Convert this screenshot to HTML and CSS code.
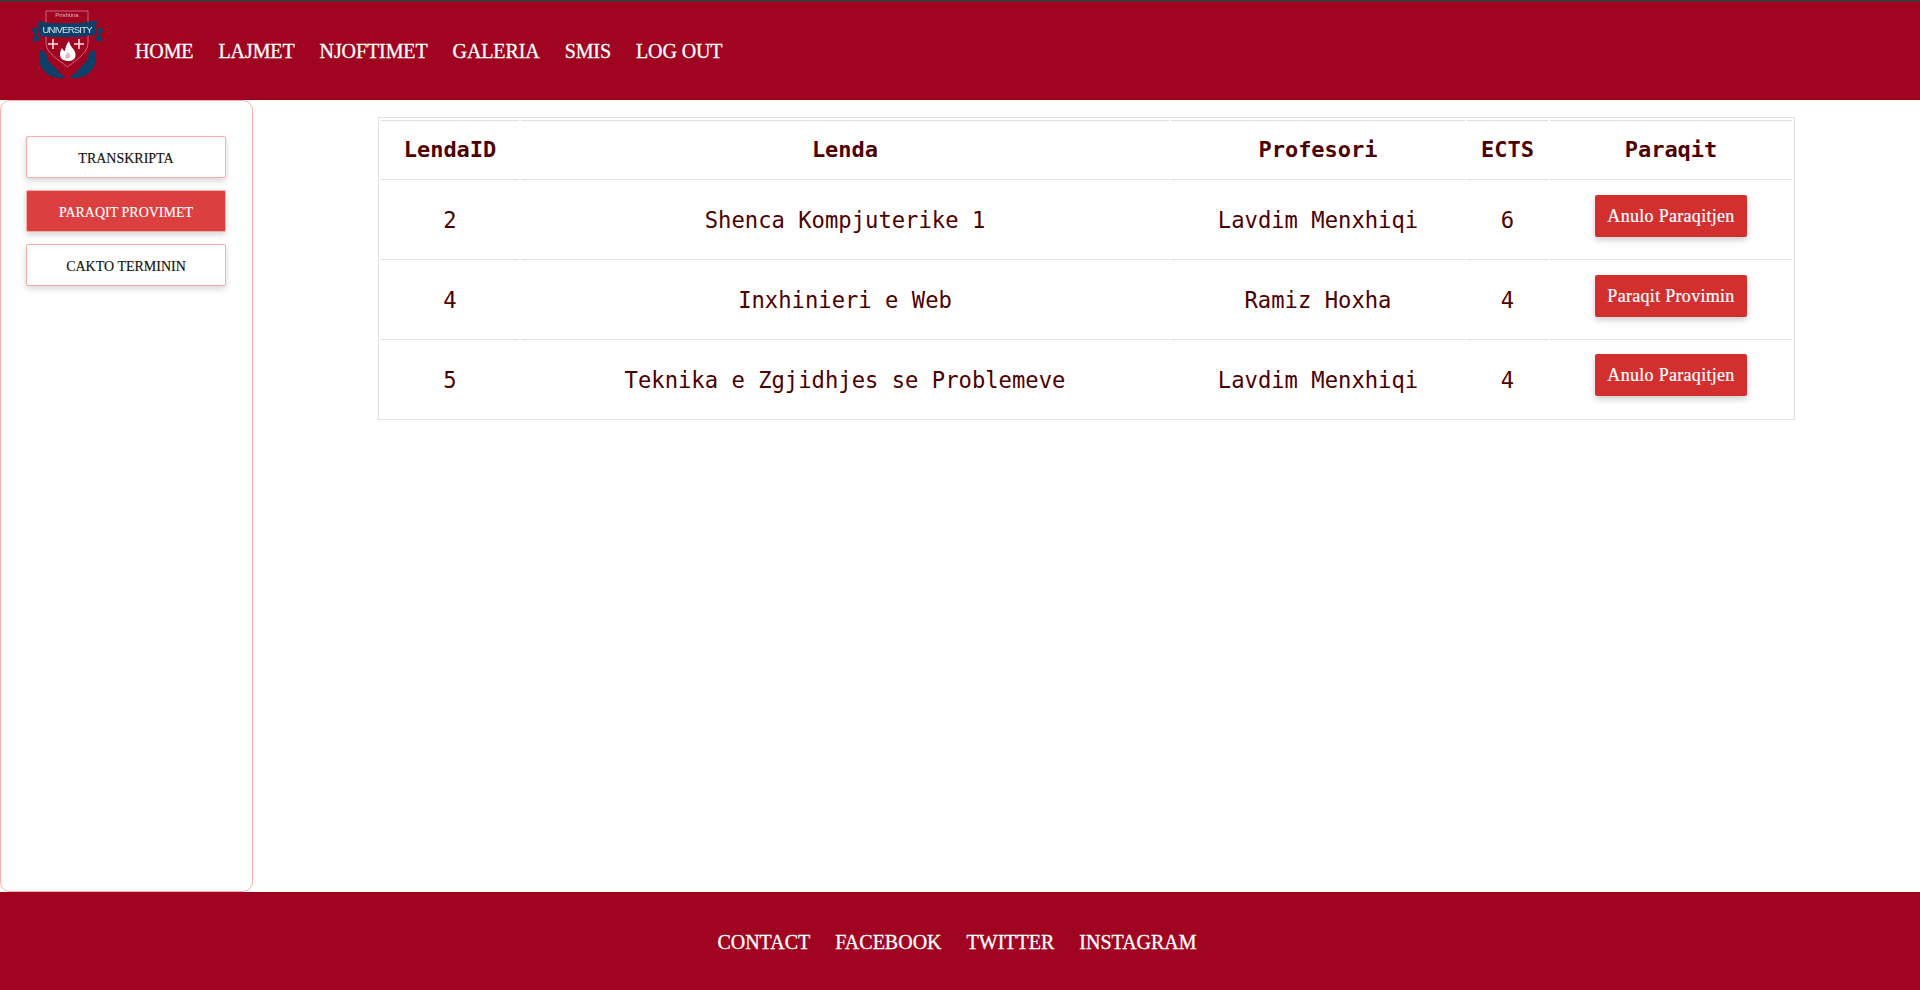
FILE: index.html
```html
<!DOCTYPE html>
<html lang="en">

<head>
    <meta charset="UTF-8">
    <meta name="viewport" content="width=device-width, initial-scale=1.0">
    <title>Paraqit Provimet</title>
    <link rel="stylesheet" href="styles.css">
</head>

<body>
    <header class="topbar">
        <svg class="logo" viewBox="0 0 80 76" width="80" height="76" aria-hidden="true">
            <path class="logo-shield" d="M18 3 H60 V35 C60 45 48 52 39.5 59 C31 52 18 45 18 35 Z" />
            <text class="logo-small" x="39" y="8.5" text-anchor="middle">Prishtina</text>
            <path class="logo-blue" d="M3 21 L10 19 V28 L13 32 L4 34 L7 27 Z" />
            <path class="logo-blue" d="M76 21 L69 19 V28 L66 32 L75 34 L72 27 Z" />
            <path class="logo-blue" d="M10 13.5 Q40 18 69 12.5 L67 27 Q40 31 11 28 Z" />
            <text class="logo-name" x="39.5" y="25" text-anchor="middle" textLength="50">UNIVERSITY</text>
            <path class="logo-cross" d="M25 31 V41 M20 36 H30 M51 31 V41 M46 36 H56" />
            <path class="logo-white" d="M41 33 C42 38 44 39 46 42 C48 45 48 49 46 51 C44 53 42 53 40 53 C36 53 32 51 32 46 C32 44 33 42 34 40 C35 42 36 43 37 43 C37 39 39 36 41 33 Z" />
            <path class="logo-flame" d="M40 44 C41 46 43 47 42 49 C41 51 38 51 37 49 C37 47 39 46 40 44 Z" />
            <path class="logo-blue" d="M13 42 C16 42 19 46 19 50 C20 54 26 58 29 62 L37 70 C30 71 22 69 17 64 C11 58 9 49 13 42 Z" />
            <path class="logo-blue" d="M66 42 C63 42 60 46 60 50 C59 54 53 58 50 62 L42 70 C49 71 57 69 62 64 C68 58 70 49 66 42 Z" />
        </svg>
        <nav class="nav">
            <a href="#">HOME</a>
            <a href="#">LAJMET</a>
            <a href="#">NJOFTIMET</a>
            <a href="#">GALERIA</a>
            <a href="#">SMIS</a>
            <a href="#">LOG OUT</a>
        </nav>
    </header>

    <div class="page">
        <aside class="sidebar">
            <a class="side-btn" href="#">TRANSKRIPTA</a>
            <a class="side-btn active" href="#">PARAQIT PROVIMET</a>
            <a class="side-btn" href="#">CAKTO TERMININ</a>
        </aside>

        <main class="content">
            <table class="exams">
                <thead>
                    <tr>
                        <th class="col-id">LendaID</th>
                        <th class="col-name">Lenda</th>
                        <th class="col-prof">Profesori</th>
                        <th class="col-ects">ECTS</th>
                        <th class="col-action">Paraqit</th>
                    </tr>
                </thead>
                <tbody>
                    <tr>
                        <td>2</td>
                        <td>Shenca Kompjuterike 1</td>
                        <td>Lavdim Menxhiqi</td>
                        <td>6</td>
                        <td class="cell-action"><button class="exam-btn">Anulo Paraqitjen</button></td>
                    </tr>
                    <tr>
                        <td>4</td>
                        <td>Inxhinieri e Web</td>
                        <td>Ramiz Hoxha</td>
                        <td>4</td>
                        <td class="cell-action"><button class="exam-btn">Paraqit Provimin</button></td>
                    </tr>
                    <tr>
                        <td>5</td>
                        <td>Teknika e Zgjidhjes se Problemeve</td>
                        <td>Lavdim Menxhiqi</td>
                        <td>4</td>
                        <td class="cell-action"><button class="exam-btn">Anulo Paraqitjen</button></td>
                    </tr>
                </tbody>
            </table>
        </main>
    </div>

    <footer class="footer">
        <a href="#">CONTACT</a>
        <a href="#">FACEBOOK</a>
        <a href="#">TWITTER</a>
        <a href="#">INSTAGRAM</a>
    </footer>
</body>

</html>
```

FILE: styles.css
```css
* {
    box-sizing: border-box;
}

body {
    margin: 0;
    height: 990px;
    display: flex;
    flex-direction: column;
    font-family: 'Liberation Serif', serif;
    background-color: #fff;
    overflow: hidden;
}

.topbar {
    height: 100px;
    display: flex;
    align-items: center;
    padding-left: 28px;
    background-color: #a10420;
    border-top: 2px solid #4a3038;
}

.logo {
    margin-bottom: 10px;
    filter: blur(0.3px);
}

.logo-shield {
    fill: none;
    stroke: #d9818f;
    stroke-width: 0.8;
}

.logo-blue {
    fill: #0d4068;
}

.logo-white {
    fill: #fff;
}

.logo-flame {
    fill: #eeb4bd;
}

.logo-cross {
    fill: none;
    stroke: #f3dfe2;
    stroke-width: 1.6;
}

.logo-small {
    font-family: 'Liberation Sans', sans-serif;
    font-size: 6px;
    fill: #e6b8c0;
}

.logo-name {
    font-family: 'Liberation Sans', sans-serif;
    font-size: 9.5px;
    fill: #d8e6f0;
}

.nav {
    display: flex;
    gap: 25px;
    margin-left: 27px;
    padding-top: 1px;
}

.nav a,
.footer a {
    color: #fff;
    text-decoration: none;
    font-size: 20px;
    -webkit-text-stroke: 0.3px #fff;
}

.nav a {
    letter-spacing: -0.1px;
}

.page {
    flex: 1;
    display: flex;
}

.sidebar {
    width: 253px;
    display: flex;
    flex-direction: column;
    gap: 12px;
    padding: 35px 0 0 25px;
    border: 1px solid #ffabab;
    border-radius: 10px;
}

.side-btn {
    width: 200px;
    height: 42px;
    display: flex;
    align-items: center;
    justify-content: center;
    padding-top: 3px;
    font-size: 14px;
    color: #111;
    text-decoration: none;
    background-color: #fff;
    border: 1px solid #ffabab;
    border-radius: 2px;
    box-shadow: 0 3px 6px rgba(0, 0, 0, 0.16);
    -webkit-text-stroke: 0.15px currentColor;
}

.side-btn.active {
    color: #fff;
    background-color: #dc3f3f;
}

.content {
    flex: 1;
    padding: 17px 125px 0;
}

.exams {
    width: 1417px;
    table-layout: fixed;
    border: 1px solid #e0e0e0;
    border-spacing: 2px 2px;
    font-family: 'DejaVu Sans Mono', monospace;
    font-size: 22.2px;
    color: #4d0000;
    text-align: center;
}

.col-id {
    width: 138px;
}

.col-name {
    width: 648px;
}

.col-prof {
    width: 294px;
}

.col-ects {
    width: 81px;
}

.exams th {
    height: 60px;
    padding: 0 0 2px;
    border-top: 1px solid #e0e0e0;
    border-bottom: 1px solid #e0e0e0;
    font-size: 22px;
}

.exams td {
    height: 78px;
    padding: 0 0 2px;
    border-bottom: 1px solid #e0e0e0;
}

.exams tr:last-child td {
    height: 75px;
    padding-bottom: 0;
    border-bottom: none;
}

.exams .cell-action,
.exams tr:last-child .cell-action {
    padding-bottom: 9px;
}

.exam-btn {
    height: 42px;
    padding: 0 12px;
    font-family: 'Liberation Serif', serif;
    font-size: 18px;
    letter-spacing: 0.3px;
    color: #fff;
    background-color: #d32f2f;
    border: none;
    border-radius: 2px;
    box-shadow: 0 3px 6px rgba(0, 0, 0, 0.2);
    -webkit-text-stroke: 0.2px #fff;
}

.footer {
    height: 98px;
    display: flex;
    align-items: center;
    justify-content: center;
    gap: 25px;
    padding: 2px 6px 0 0;
    background-color: #a10420;
}
```
